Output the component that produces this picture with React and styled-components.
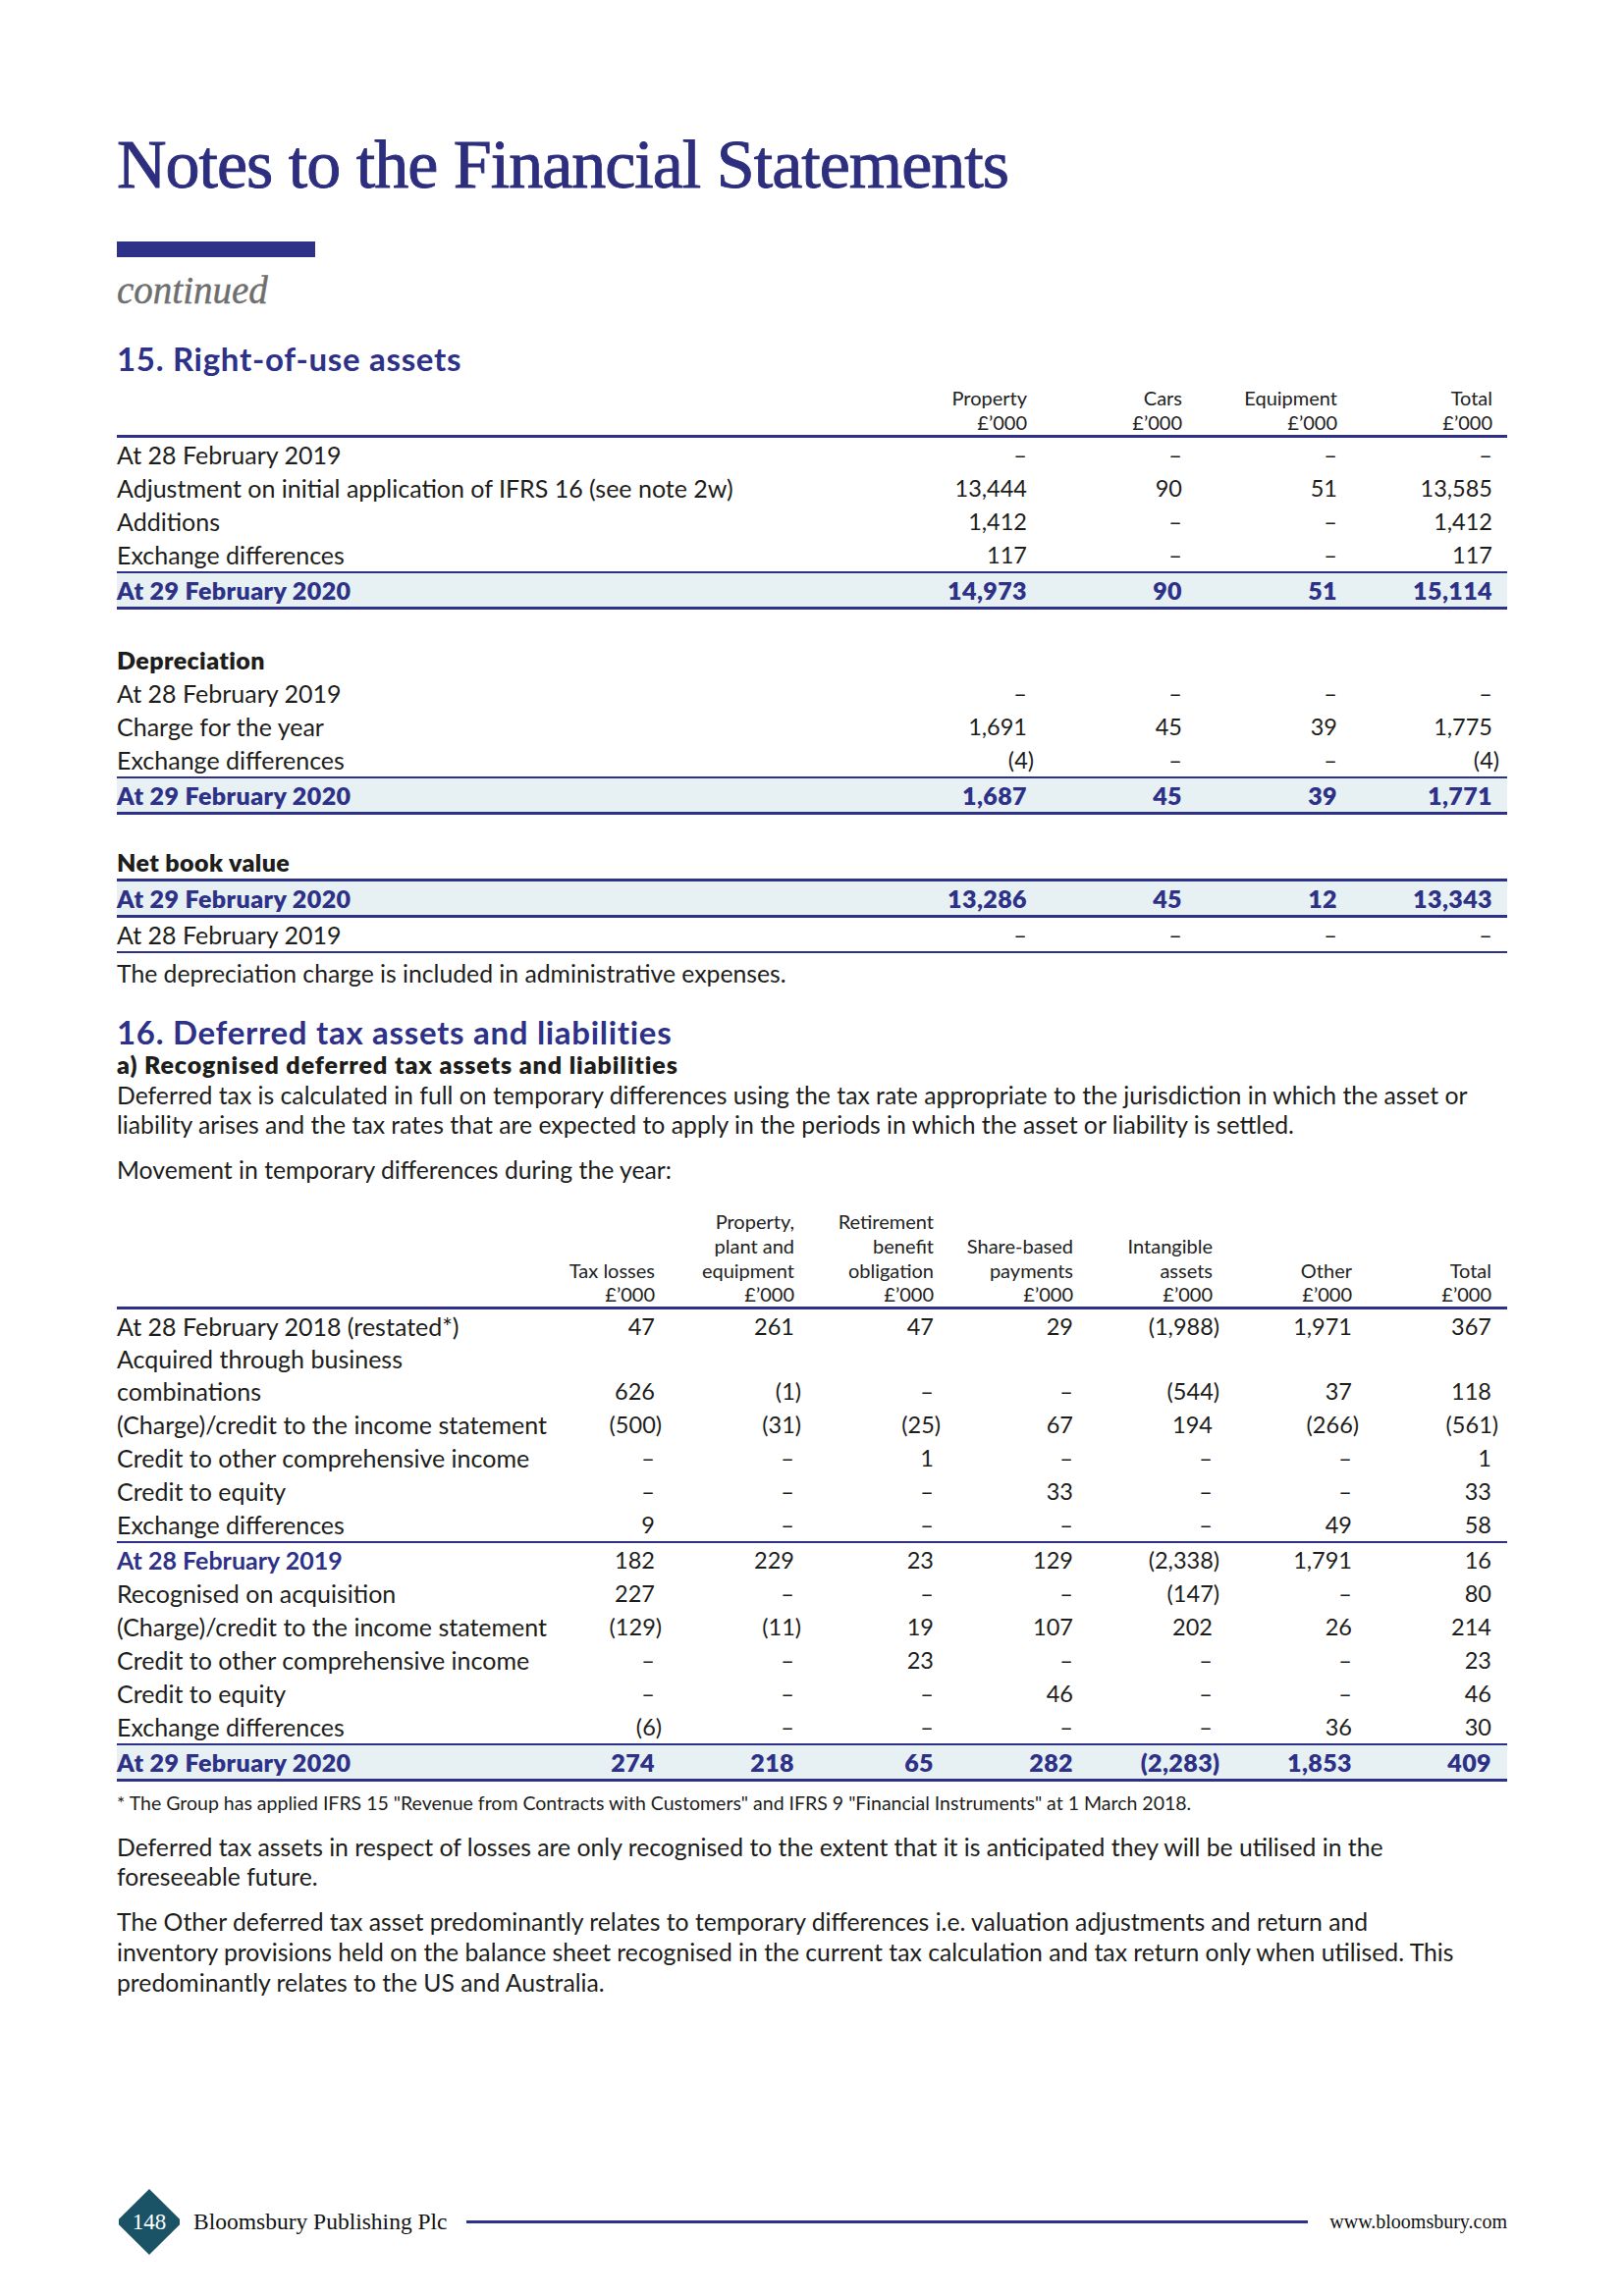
import React from "react";
import styled, { createGlobalStyle } from "styled-components";

const NAVY = "#2e3188";
const INK = "#1d1d1b";

const GlobalStyle = createGlobalStyle`
  html, body {
    margin: 0;
    padding: 0;
    background: #ffffff;
  }
  body {
    font-family: Lato, "Noto Sans", sans-serif;
    color: ${INK};
  }
`;

const Page = styled.div`
  width: 1654px;
  min-height: 2339px;
  box-sizing: border-box;
  padding: 133px 119px 42px;
  display: flex;
  flex-direction: column;
`;

const Title = styled.h1`
  margin: 0;
  font-family: "Liberation Serif", "DejaVu Serif", serif;
  font-weight: normal;
  font-size: 70px;
  line-height: 70px;
  letter-spacing: -1px;
  color: #2d2f7e;
  -webkit-text-stroke: 0.9px #2d2f7e;
`;

const Bar = styled.div`
  margin-top: 43px;
  width: 202px;
  height: 16px;
  background: ${NAVY};
`;

const Continued = styled.div`
  margin-top: 15px;
  font-family: "Liberation Serif", "DejaVu Serif", serif;
  font-style: italic;
  font-size: 39px;
  line-height: 38px;
  color: #6e6e6e;
  -webkit-text-stroke: 0.4px #6e6e6e;
`;

const Heading = styled.h2`
  margin: ${(p) => p.$top || 0}px 0 0;
  font-size: 33px;
  line-height: 36px;
  letter-spacing: 0.7px;
  font-weight: 700;
  color: ${NAVY};
`;

const SubHeading = styled.h3`
  margin: 0;
  font-size: 25px;
  line-height: 30px;
  letter-spacing: 0.9px;
  font-weight: 800;
  color: ${INK};
`;

const Para = styled.p`
  margin: ${(p) => p.$top || 0}px 0 0;
  font-size: 24.75px;
  line-height: ${(p) => p.$lh || 30}px;
  color: ${INK};
`;

const Footnote = styled.p`
  margin: 10px 0 0;
  font-size: 19.5px;
  line-height: 24px;
  color: ${INK};
`;

/* ---------- tables ---------- */

const Table = styled.div`
  margin-top: ${(p) => p.$top || 0}px;
  display: flex;
  flex-direction: column;
`;

const HeadRow = styled.div`
  display: grid;
  grid-template-columns: ${(p) => p.$cols};
  padding-right: ${(p) => p.$pad}px;
  align-items: end;
  border-bottom: 3px solid ${NAVY};
  font-size: 20px;
  line-height: ${(p) => p.$lh}px;
  color: #222;
`;

const HeadCell = styled.div`
  text-align: right;
  white-space: nowrap;
`;

const Row = styled.div`
  display: grid;
  grid-template-columns: ${(p) => p.$cols};
  padding-right: ${(p) => p.$pad}px;
  align-items: end;
  min-height: 34px;
  line-height: 34px;
  margin-top: ${(p) => p.$top || 0}px;
  border-top: ${(p) => (p.$ruleTop ? `${p.$ruleTop}px solid ${NAVY}` : "none")};
  border-bottom: ${(p) =>
    p.$ruleBottom ? `${p.$ruleBottom}px solid ${NAVY}` : "none"};
  background: ${(p) => (p.$band ? "#e7f0f2" : "transparent")};
  color: ${(p) => (p.$total ? NAVY : INK)};
  font-weight: ${(p) => (p.$total ? 800 : 400)};
  letter-spacing: ${(p) => (p.$total ? "0.4px" : "0")};
`;

const Label = styled.div`
  white-space: nowrap;
  font-size: 25px;
  line-height: ${(p) => (p.$multi ? 33 : 34)}px;
  color: ${(p) => (p.$navy ? NAVY : "inherit")};
  font-weight: ${(p) => (p.$strong ? 800 : p.$semi ? 700 : "inherit")};
  letter-spacing: ${(p) => (p.$strong ? "0.4px" : "inherit")};
`;

const Value = styled.div`
  text-align: right;
  white-space: nowrap;
  font-size: ${(p) => (p.$bold ? 25 : 23.5)}px;
`;

const Neg = styled.span`
  margin-right: -0.3em;
`;

function Num({ v }) {
  if (v.startsWith("(")) return <Neg>{v}</Neg>;
  return <span>{v}</span>;
}

function DataRow({ cols, pad, row, ...rest }) {
  const [label, ...values] = row;
  const lines = label.split("\n");
  return (
    <Row $cols={cols} $pad={pad} {...rest}>
      <Label
        $multi={lines.length > 1}
        $navy={rest.$navyLabel}
        $semi={rest.$navyLabel}
      >
        {lines.map((l, i) => (
          <React.Fragment key={i}>
            {i > 0 && <br />}
            {l}
          </React.Fragment>
        ))}
      </Label>
      {values.map((v, i) => (
        <Value key={i} $bold={rest.$total}>
          <Num v={v} />
        </Value>
      ))}
    </Row>
  );
}

const ROU_COLS = "minmax(0, 1fr) repeat(4, 158px)";
const DT_COLS = "minmax(0, 1fr) repeat(7, 142px)";

const rouHead = [["Property"], ["Cars"], ["Equipment"], ["Total"]];
const dtHead = [
  ["Tax losses"],
  ["Property,", "plant and", "equipment"],
  ["Retirement", "benefit", "obligation"],
  ["Share-based", "payments"],
  ["Intangible", "assets"],
  ["Other"],
  ["Total"],
];

const D = "–";

const cost = [
  ["At 28 February 2019", D, D, D, D],
  ["Adjustment on initial application of IFRS 16 (see note 2w)", "13,444", "90", "51", "13,585"],
  ["Additions", "1,412", D, D, "1,412"],
  ["Exchange differences", "117", D, D, "117"],
];
const depreciation = [
  ["At 28 February 2019", D, D, D, D],
  ["Charge for the year", "1,691", "45", "39", "1,775"],
  ["Exchange differences", "(4)", D, D, "(4)"],
];

const dt2019 = [
  ["At 28 February 2018 (restated*)", "47", "261", "47", "29", "(1,988)", "1,971", "367"],
  ["Acquired through business\ncombinations", "626", "(1)", D, D, "(544)", "37", "118"],
  ["(Charge)/credit to the income statement", "(500)", "(31)", "(25)", "67", "194", "(266)", "(561)"],
  ["Credit to other comprehensive income", D, D, "1", D, D, D, "1"],
  ["Credit to equity", D, D, D, "33", D, D, "33"],
  ["Exchange differences", "9", D, D, D, D, "49", "58"],
];
const dt2020 = [
  ["Recognised on acquisition", "227", D, D, D, "(147)", D, "80"],
  ["(Charge)/credit to the income statement", "(129)", "(11)", "19", "107", "202", "26", "214"],
  ["Credit to other comprehensive income", D, D, "23", D, D, D, "23"],
  ["Credit to equity", D, D, D, "46", D, D, "46"],
  ["Exchange differences", "(6)", D, D, D, D, "36", "30"],
];

function Head({ cols, pad, lh, items }) {
  return (
    <HeadRow $cols={cols} $pad={pad} $lh={lh}>
      <div />
      {items.map((lines, i) => (
        <HeadCell key={i}>
          {[...lines, "£’000"].map((l, j) => (
            <div key={j}>{l}</div>
          ))}
        </HeadCell>
      ))}
    </HeadRow>
  );
}

/* ---------- footer ---------- */

const Footer = styled.footer`
  margin-top: auto;
  display: flex;
  align-items: center;
  font-family: "Liberation Serif", "DejaVu Serif", serif;
  color: #111;
`;

const Badge = styled.div`
  width: 66px;
  height: 67px;
  flex: none;
  display: flex;
  align-items: center;
  justify-content: center;
  background: #1b5366;
  clip-path: polygon(50% 0, 97% 46%, 97% 54%, 50% 100%, 3% 54%, 3% 46%);
  color: #fff;
  font-size: 23px;
`;

const Publisher = styled.span`
  margin-left: 12px;
  font-size: 23.5px;
`;

const FooterRule = styled.div`
  flex: 1;
  height: 3px;
  margin: 0 22px 0 19px;
  background: ${NAVY};
`;

const Site = styled.span`
  font-size: 20px;
`;

export default function App() {
  return (
    <>
      <GlobalStyle />
      <Page>
        <Title>Notes to the Financial Statements</Title>
        <Bar />
        <Continued>continued</Continued>

        <Heading $top={32}>15. Right-of-use assets</Heading>
        <Table $top={10}>
          <Head cols={ROU_COLS} pad={15} lh={25} items={rouHead} />
          {cost.map((r, i) => (
            <DataRow key={i} cols={ROU_COLS} pad={15} row={r} />
          ))}
          <DataRow
            cols={ROU_COLS}
            pad={15}
            row={["At 29 February 2020", "14,973", "90", "51", "15,114"]}
            $total
            $band
            $ruleTop={2}
            $ruleBottom={3}
          />

          <Row $cols={ROU_COLS} $pad={15} $top={34}>
            <Label $strong>Depreciation</Label>
          </Row>
          {depreciation.map((r, i) => (
            <DataRow key={i} cols={ROU_COLS} pad={15} row={r} />
          ))}
          <DataRow
            cols={ROU_COLS}
            pad={15}
            row={["At 29 February 2020", "1,687", "45", "39", "1,771"]}
            $total
            $band
            $ruleTop={2}
            $ruleBottom={3}
          />

          <Row $cols={ROU_COLS} $pad={15} $top={31}>
            <Label $strong>Net book value</Label>
          </Row>
          <DataRow
            cols={ROU_COLS}
            pad={15}
            row={["At 29 February 2020", "13,286", "45", "12", "13,343"]}
            $total
            $band
            $ruleTop={3}
            $ruleBottom={3}
          />
          <DataRow
            cols={ROU_COLS}
            pad={15}
            row={["At 28 February 2019", D, D, D, D]}
            $ruleBottom={2}
          />
        </Table>
        <Para $top={4} $lh={34}>
          The depreciation charge is included in administrative expenses.
        </Para>

        <Heading $top={24}>16. Deferred tax assets and liabilities</Heading>
        <SubHeading>a) Recognised deferred tax assets and liabilities</SubHeading>
        <Para $top={2}>
          Deferred tax is calculated in full on temporary differences using the
          tax rate appropriate to the jurisdiction in which the asset or
          <br />
          liability arises and the tax rates that are expected to apply in the
          periods in which the asset or liability is settled.
        </Para>
        <Para $top={16}>Movement in temporary differences during the year:</Para>

        <Table $top={25}>
          <Head cols={DT_COLS} pad={16} lh={24.75} items={dtHead} />
          {dt2019.map((r, i) => (
            <DataRow key={i} cols={DT_COLS} pad={16} row={r} />
          ))}
          <DataRow
            cols={DT_COLS}
            pad={16}
            row={["At 28 February 2019", "182", "229", "23", "129", "(2,338)", "1,791", "16"]}
            $ruleTop={2}
            $navyLabel
          />
          {dt2020.map((r, i) => (
            <DataRow key={i} cols={DT_COLS} pad={16} row={r} />
          ))}
          <DataRow
            cols={DT_COLS}
            pad={16}
            row={["At 29 February 2020", "274", "218", "65", "282", "(2,283)", "1,853", "409"]}
            $total
            $band
            $ruleTop={2}
            $ruleBottom={3}
          />
        </Table>
        <Footnote>
          * The Group has applied IFRS 15 "Revenue from Contracts with
          Customers" and IFRS 9 "Financial Instruments" at 1 March 2018.
        </Footnote>
        <Para $top={18}>
          Deferred tax assets in respect of losses are only recognised to the
          extent that it is anticipated they will be utilised in the
          <br />
          foreseeable future.
        </Para>
        <Para $top={15} $lh={31}>
          The Other deferred tax asset predominantly relates to temporary
          differences i.e. valuation adjustments and return and
          <br />
          inventory provisions held on the balance sheet recognised in the
          current tax calculation and tax return only when utilised. This
          <br />
          predominantly relates to the US and Australia.
        </Para>

        <Footer>
          <Badge>148</Badge>
          <Publisher>Bloomsbury Publishing Plc</Publisher>
          <FooterRule />
          <Site>www.bloomsbury.com</Site>
        </Footer>
      </Page>
    </>
  );
}
